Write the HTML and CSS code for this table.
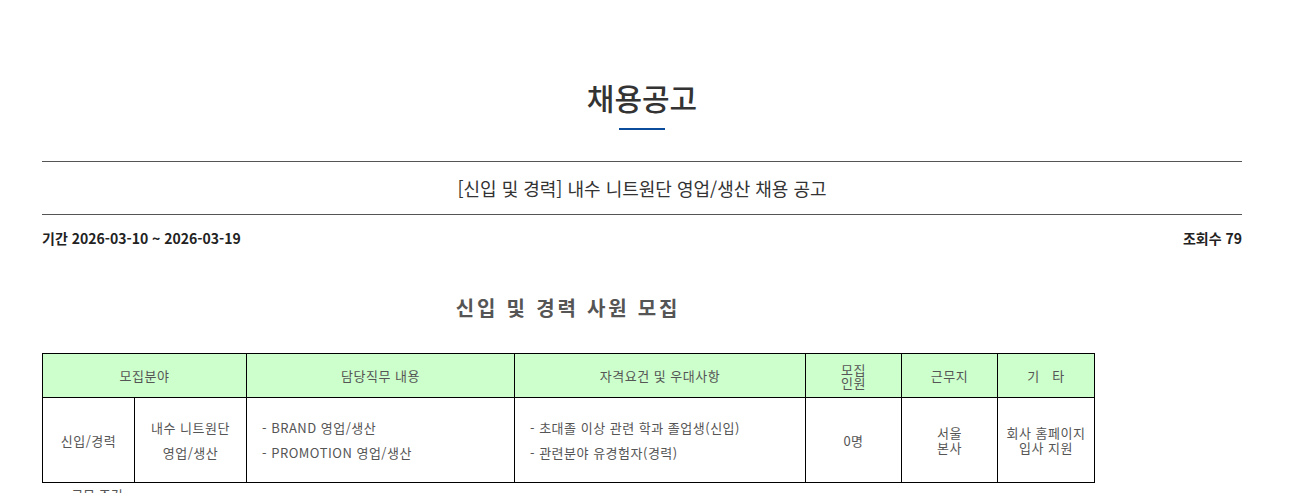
FILE: index.html
```html
<!DOCTYPE html>
<html lang="ko">
<head>
<meta charset="utf-8">
<title>채용공고</title>
<link rel="stylesheet" href="styles.css">
</head>
<body>
<div class="page">
  <h1 class="page-title">채용공고</h1>
  <div class="title-bar"></div>
  <div class="subject">[신입 및 경력] 내수 니트원단 영업/생산 채용 공고</div>
  <div class="info">
    <span>기간 2026-03-10 ~ 2026-03-19</span>
    <span>조회수 79</span>
  </div>
  <div class="content">
    <h2 class="section-title">신입 및 경력 사원 모집</h2>
    <table class="jobs">
      <colgroup>
        <col style="width:92px"><col style="width:112px"><col style="width:268px"><col style="width:291px"><col style="width:96px"><col style="width:96px"><col style="width:97px">
      </colgroup>
      <thead>
        <tr>
          <th colspan="2">모집분야</th>
          <th>담당직무 내용</th>
          <th>자격요건 및 우대사항</th>
          <th class="tight">모집<br>인원</th>
          <th>근무지</th>
          <th>기&nbsp;&nbsp;&nbsp;타</th>
        </tr>
      </thead>
      <tbody>
        <tr>
          <td>신입/경력</td>
          <td class="wide">내수 니트원단<br>영업/생산</td>
          <td class="left wide">- BRAND 영업/생산<br>- PROMOTION 영업/생산</td>
          <td class="left wide">- 초대졸 이상 관련 학과 졸업생(신입)<br>- 관련분야 유경험자(경력)</td>
          <td>0명</td>
          <td class="tight2">서울<br>본사</td>
          <td class="tight2">회사 홈페이지<br>입사 지원</td>
        </tr>
      </tbody>
    </table>
    <p class="note">- 근무 조건</p>
  </div>
</div>
</body>
</html>
```

FILE: styles.css
```css
* { box-sizing: border-box; }
html, body { margin: 0; padding: 0; background: #fff; }
body {
  font-family: "Noto Sans CJK KR", "Noto Sans", sans-serif;
  color: #333;
}
.page {
  width: 1200px;
  margin-left: 42px;
  padding-top: 76px;
}
.page-title {
  margin: 0;
  text-align: center;
  font-size: 30px;
  font-weight: 500;
  line-height: 42px;
  color: #333;
}
.title-bar {
  width: 46px;
  height: 2px;
  background: #0b4c9c;
  margin: 10px auto 31px;
}
.subject {
  border-top: 1px solid #555;
  border-bottom: 1px solid #555;
  height: 54px;
  line-height: 52px;
  text-align: center;
  font-size: 18px;
  color: #333;
}
.info {
  display: flex;
  justify-content: space-between;
  font-size: 14px;
  font-weight: 700;
  color: #222;
  padding-top: 13px;
  line-height: 20px;
}
.content {
  width: 1052px;
  padding-top: 45px;
}
.section-title {
  margin: 0;
  text-align: center;
  font-size: 20px;
  font-weight: 700;
  letter-spacing: 2.8px;
  color: #555;
  line-height: 30px;
  height: 60px;
}
.jobs {
  width: 1052px;
  border-collapse: collapse;
  table-layout: fixed;
  font-size: 13px;
  letter-spacing: 0.5px;
  color: #555;
}
.jobs th, .jobs td {
  border: 1px solid #000;
  text-align: center;
  padding: 0;
  font-weight: 400;
  line-height: 25px;
}
.jobs th {
  background: #ccffcc;
  height: 44px;
}
.jobs td { height: 85px; }
.jobs .tight { line-height: 13px; padding-top: 1px; }
.jobs .tight2 { line-height: 15px; }
.jobs .left { text-align: left; padding-left: 15px; }
.note {
  margin: 2px 0 0 21px;
  font-size: 13px;
  color: #555;
  line-height: 20px;
}
```
